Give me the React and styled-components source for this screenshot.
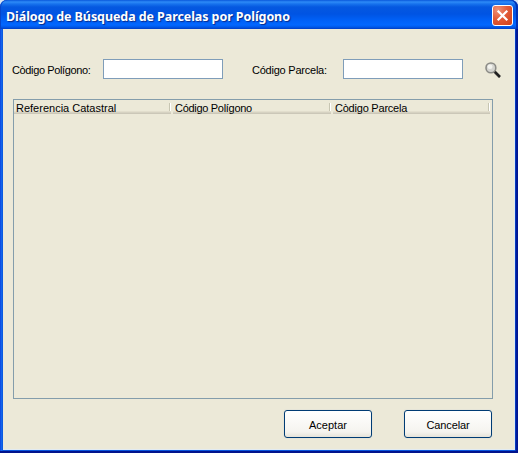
import React from "react";
import styled, { createGlobalStyle } from "styled-components";

const GlobalStyle = createGlobalStyle`
  *, *::after { box-sizing: border-box; }
  body {
    margin: 0;
    overflow: hidden;
    background: #d9e4f1;
    color: #000;
    font: 11px/14px "Liberation Sans", Arial, sans-serif;
  }
`;

const Window = styled.main`
  display: flex;
  flex-direction: column;
  width: 518px;
  height: 453px;
  border-radius: 7px 7px 0 0;
  padding: 0 3px 3px;
  background: linear-gradient(90deg, #0831d9 0, #166aee 1px, #0855dd 3px, #0855dd 515px, #001da0 516px, #00138c 518px);
  box-shadow: inset 0 -2px #00138c;
`;

const TitleBar = styled.header`
  display: flex;
  align-items: center;
  justify-content: space-between;
  flex: none;
  height: 29px;
  margin: 0 -3px;
  padding: 2px 6px 0;
  border-radius: 7px 7px 0 0;
  background: linear-gradient(#0958db 0, #2d8bf7 2px, #1672ed 4px, #0558e0 7px, #0054e3 14px, #0060f6 20px, #0267ff 25px, #0059e9 27px, #003dc4 29px);
  box-shadow: inset 1px 0 #0645c9, inset -2px 0 #0030b4;
`;

const Title = styled.h1`
  margin: 2px 0 0;
  color: #fff;
  font: bold 12.5px/18px "Noto Sans", sans-serif;
  letter-spacing: ${(p) => p.$spacing}px;
  white-space: nowrap;
  text-shadow: 1px 1px 1px #092b8b;
`;

const CloseButton = styled.button`
  display: grid;
  place-items: center;
  width: 21px;
  height: 21px;
  margin-right: -1px;
  padding: 0;
  border: 1px solid #fff;
  border-radius: 3px;
  background: radial-gradient(circle at 25% 20%, #ee9278 0, #e25b38 45%, #cf3f18 100%);
`;

const Content = styled.section`
  display: flex;
  flex-direction: column;
  flex: 1;
  min-height: 0;
  padding: 30px 0 0 9px;
  background: #ece9d8;
  border-bottom: 1px solid #e2ebf2;
  border-right: 1px solid #dfe8ef;
`;

const SearchRow = styled.div`
  display: grid;
  grid-template-columns: 91px 149px 91px 142px 16px;
  align-items: center;
  height: 20px;
`;

const Label = styled.label`
  padding-top: 2px;
  letter-spacing: ${(p) => p.$spacing || 0}px;
  white-space: nowrap;
`;

const Field = styled.input`
  width: 120px;
  height: 20px;
  padding: 2px;
  border: 1px solid #7f9db9;
  border-radius: 0;
  background: #fff;
  font: inherit;
`;

const SearchButton = styled.button`
  width: 16px;
  height: 16px;
  margin-top: 2px;
  padding: 0;
  border: 0;
  background: none;
  svg { display: block; }
`;

const Table = styled.div`
  width: 480px;
  height: 300px;
  margin: 20px 0 0 1px;
  border: 1px solid #849dab;
`;

const TableHeader = styled.div`
  display: grid;
  grid-template-columns: 157px 158px 157px;
  column-gap: 2px;
  height: 14px;
`;

const HeaderCell = styled.div`
  display: flex;
  justify-content: space-between;
  height: 14px;
  padding-left: 2px;
  background: linear-gradient(#ece9d8 11px, #e2decd 11px 12px, #d6d2c2 12px 13px, #cbc7b8 13px);
  line-height: 16px;
  letter-spacing: ${(p) => p.$spacing || 0}px;
  white-space: nowrap;
  &::after {
    content: "";
    width: 2px;
    height: 8px;
    margin-top: 3px;
    border-left: 1px solid #c7c5b2;
    border-right: 1px solid #fff;
  }
`;

const Actions = styled.footer`
  display: flex;
  gap: 32px;
  margin: 11px 0 0 272px;
`;

const ActionButton = styled.button`
  width: 88px;
  height: 28px;
  padding: 2px 0 0;
  border: 1px solid #003c74;
  border-radius: 3px;
  background: linear-gradient(#fff, #f5f4ef 80%, #e6e3d9);
  box-shadow: 0 0 0 1px #e5e4d8;
  color: #000;
  font: inherit;
  letter-spacing: ${(p) => p.$spacing || 0}px;
`;

const CloseIcon = () => (
  <svg width="19" height="19" viewBox="0 0 19 19" fill="none">
    <path d="M4.7 4.7l9.6 9.6M14.3 4.7l-9.6 9.6" stroke="#fff" strokeWidth="2.2" />
  </svg>
);

const SearchIcon = () => (
  <svg width="16" height="16" viewBox="0 0 16 16" fill="none">
    <path d="M9.5 11l5 5" stroke="#bbb8aa" strokeWidth="1.5" />
    <path d="M9 9l6 6" stroke="#222" strokeWidth="2.6" />
    <circle cx="5.9" cy="5.9" r="4.9" fill="#d5d5d0" stroke="#8b8b86" strokeWidth="1.6" />
    <ellipse cx="5" cy="4.8" rx="2.5" ry="2.3" fill="#f3f3ee" />
  </svg>
);

export default function App() {
  return (
    <>
      <GlobalStyle />
      <Window>
        <TitleBar>
          <Title $spacing={-0.08}>Diálogo de Búsqueda de Parcelas por Polígono</Title>
          <CloseButton aria-label="Cerrar"><CloseIcon /></CloseButton>
        </TitleBar>
        <Content>
          <SearchRow>
            <Label htmlFor="poligono" $spacing={-0.37}>Còdigo Polígono:</Label>
            <Field id="poligono" />
            <Label htmlFor="parcela" $spacing={-0.23}>Código Parcela:</Label>
            <Field id="parcela" />
            <SearchButton aria-label="Buscar"><SearchIcon /></SearchButton>
          </SearchRow>
          <Table>
            <TableHeader>
              <HeaderCell>Referencia Catastral</HeaderCell>
              <HeaderCell $spacing={-0.3}>Código Polígono</HeaderCell>
              <HeaderCell $spacing={-0.22}>Còdigo Parcela</HeaderCell>
            </TableHeader>
          </Table>
          <Actions>
            <ActionButton>Aceptar</ActionButton>
            <ActionButton $spacing={-0.1}>Cancelar</ActionButton>
          </Actions>
        </Content>
      </Window>
    </>
  );
}
